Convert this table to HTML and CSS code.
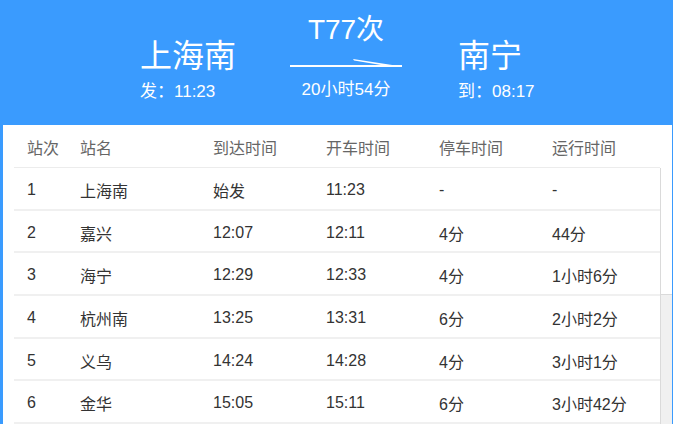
FILE: index.html
```html
<!DOCTYPE html>
<html lang="zh-CN">
<head>
<meta charset="utf-8">
<title>T77次</title>
<link rel="stylesheet" href="styles.css">
</head>
<body>
<div class="page">
  <header class="hero">
    <div class="end end-from">
      <div class="city">上海南</div>
      <div class="sub">发：11:23</div>
    </div>
    <div class="mid">
      <div class="train">T77次</div>
      <svg class="arrow" width="112" height="10" viewBox="0 0 112 10">
        <rect x="0" y="7" width="112" height="2" fill="#fff"/>
        <polygon points="63,1 112,8.5 100,8.5 64,2.6" fill="#fff"/>
      </svg>
      <div class="sub">20小时54分</div>
    </div>
    <div class="end end-to">
      <div class="city">南宁</div>
      <div class="sub">到：08:17</div>
    </div>
  </header>
  <section class="panel">
    <div class="row head">
      <span>站次</span><span>站名</span><span>到达时间</span><span>开车时间</span><span>停车时间</span><span>运行时间</span>
    </div>
    <div class="body">
      <div class="list">
        <div class="row"><span>1</span><span>上海南</span><span>始发</span><span>11:23</span><span>-</span><span>-</span></div>
        <div class="row"><span>2</span><span>嘉兴</span><span>12:07</span><span>12:11</span><span>4分</span><span>44分</span></div>
        <div class="row"><span>3</span><span>海宁</span><span>12:29</span><span>12:33</span><span>4分</span><span>1小时6分</span></div>
        <div class="row"><span>4</span><span>杭州南</span><span>13:25</span><span>13:31</span><span>6分</span><span>2小时2分</span></div>
        <div class="row"><span>5</span><span>义乌</span><span>14:24</span><span>14:28</span><span>4分</span><span>3小时1分</span></div>
        <div class="row"><span>6</span><span>金华</span><span>15:05</span><span>15:11</span><span>6分</span><span>3小时42分</span></div>
      </div>
      <div class="scrollbar"><div class="thumb"></div></div>
    </div>
  </section>
</div>
</body>
</html>
```
FILE: styles.css
```css
html, body {
  margin: 0;
  padding: 0;
  height: 424px;
  overflow: hidden;
}
body {
  background: #3a9bfe;
  font-family: "Liberation Sans", "Noto Sans CJK SC", sans-serif;
}
.page {
  height: 424px;
  display: flex;
  flex-direction: column;
}
.hero {
  height: 125px;
  flex: none;
  display: flex;
  padding-left: 140px;
  color: #fff;
  box-sizing: border-box;
}
.end-from {
  width: 150px;
  padding-top: 37px;
}
.end-to {
  margin-left: 56px;
  padding-top: 37px;
}
.city {
  font-size: 32px;
  line-height: 38px;
}
.sub {
  font-size: 17px;
  line-height: 20px;
  margin-top: 7px;
}
.mid {
  width: 112px;
  display: flex;
  flex-direction: column;
  align-items: center;
  padding-top: 14px;
}
.train {
  font-size: 28px;
  line-height: 32px;
}
.arrow {
  display: block;
  margin-top: 12px;
}
.mid .sub {
  margin-top: 12px;
  white-space: nowrap;
}
.panel {
  flex: 1;
  min-height: 0;
  background: #fff;
  margin-left: 3px;
  margin-right: 1px;
  padding-left: 11px;
  display: flex;
  flex-direction: column;
}
.row {
  display: grid;
  grid-template-columns: 53px 133px 113px 113px 113px 1fr;
  padding-left: 13px;
  padding-top: 3px;
  box-sizing: border-box;
  height: 43px;
  align-items: center;
  border-bottom: 2px solid #f0f0f0;
  font-size: 16px;
  color: #333;
  white-space: nowrap;
}
.row.head {
  flex: none;
  color: #666;
  height: 43px;
  padding-top: 2px;
  margin-right: 12px;
  border-bottom-width: 1px;
  border-bottom-color: #ececec;
}
.body {
  flex: 1;
  min-height: 0;
  display: flex;
}
.list {
  flex: 1;
  min-width: 0;
  overflow: hidden;
}
.list .row {
  height: 42.7px;
}
.scrollbar {
  width: 11px;
  flex: none;
  background: #f0f0f0;
  border-left: 1px solid #dadada;
}
.thumb {
  height: 126px;
  background: #fff;
  border-bottom: 1px solid #dadada;
}
```
